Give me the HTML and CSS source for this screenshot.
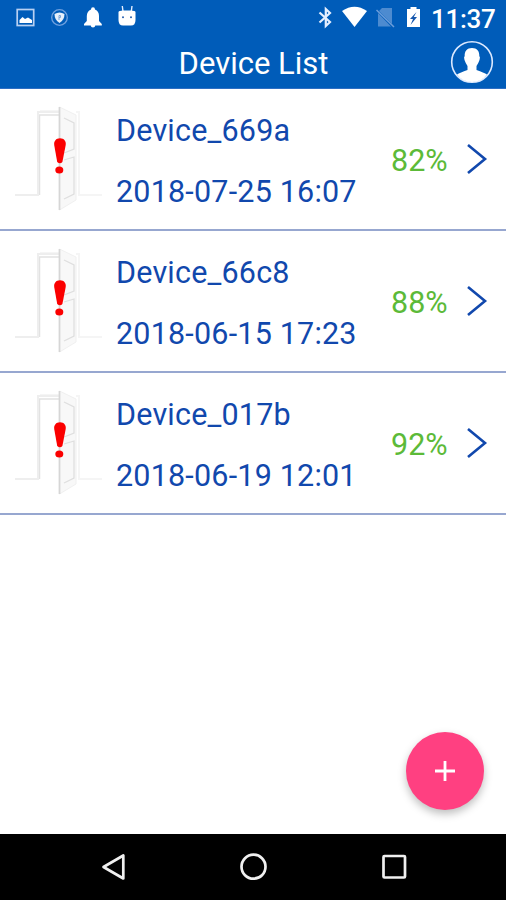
FILE: index.html
```html
<!DOCTYPE html>
<html lang="en">
<head>
<meta charset="utf-8">
<title>Device List</title>
<link rel="stylesheet" href="styles.css">
</head>
<body>
<svg class="defs" aria-hidden="true">
  <symbol id="door" viewBox="0 0 116 140">
    <path d="M40 22H59M76 23H79V106H102" fill="none" stroke="#f5f5f5" stroke-width="2"/>
    <path d="M39.500 106V26H59" fill="none" stroke="#e2e2e2" stroke-width="1.500"/>
    <path d="M15 106H38V23H59" fill="none" stroke="#eeeeee" stroke-width="2"/>
    <path d="M59.500 18L76 26V111L59.500 121Z" fill="#f8f8f8" stroke="#f0f0f0"/>
    <path d="M64 29L74 34V60L64 64M64 71L74 68V105L64 110" fill="none" stroke="#dfdfdf" stroke-width="1.300"/>
    <path d="M59.500 18V121" stroke="#d6d6d6" stroke-width="1.800"/>
    <path d="M60 49.200C64 49.200 66.300 52 65.700 56L62.400 73Q60 75.500 57.200 73L54.200 56C53.700 52 56 49.200 60 49.200Z" fill="#fb0000"/>
    <ellipse cx="59.300" cy="81" rx="4" ry="3.500" fill="#fb0000"/>
  </symbol>
  <symbol id="chevron" viewBox="0 0 22 32"><path d="M2 2L19 16L2 30" fill="none" stroke="#1148ad" stroke-width="2.600"/></symbol>
</svg>
<header class="header">
  <div class="status">
    <svg class="status-left" viewBox="0 0 140 36">
      <rect x="17.200" y="9.500" width="16.500" height="16" fill="none" stroke="#b8d0f2" stroke-width="1.700"/>
      <path d="M19.500 23V20L22.500 17L25 19L28 17.500L32 20V23Z" fill="#fff"/>
      <circle cx="59.500" cy="17.500" r="7.800" fill="none" stroke="#6fa0de" stroke-width="1.300"/>
      <path d="M54.500 14Q59.500 11 64.500 14Q64.500 20 59.500 23Q54.500 20 54.500 14Z" fill="#e5effb"/>
      <path d="M59 20V15.500H60.500V17.500H59" fill="none" stroke="#7ba4d8" stroke-width="1"/>
      <path d="M93 7.200Q95 7.200 95 9.500Q99 11 99 16V21L101.800 24V25.500H84V24L86.800 21V16Q87 11 91 9.500Q91 7.200 93 7.200ZM90.500 25H95.500Q95 27.500 93 27.500Q91 27.500 90.500 25Z" fill="#fff"/>
      <path d="M122.300 6L123 11.500M132 6L131.300 11.500" stroke="#e4eeff" stroke-width="1.400"/>
      <path d="M118.500 12Q119 10.500 123 10.500H131Q135 10.500 135.500 12V20Q135.500 25.500 131 25.500H123Q118.500 25.500 118.500 20Z" fill="#fff"/>
      <circle cx="123" cy="17.200" r="1" fill="#245fb0"/><circle cx="131" cy="17.200" r="1" fill="#245fb0"/>
    </svg>
    <svg class="status-right" viewBox="313 0 110 36">
      <path d="M319.500 12.500L330 22L325.800 26V9L330 13L319.500 22.500" fill="none" stroke="#e5efff" stroke-width="2.200"/>
      <path d="M342 11Q354.500 2.500 367 11L354.500 27Z" fill="#fff"/>
      <path d="M382 8H392V24L379 11ZM378 13L391 26.500H378Z" fill="#4d8bd0"/>
      <path d="M376.500 10L394 27" stroke="#6b9dda" stroke-width="1.500"/>
      <path d="M410.500 7H416.500V9H420V27H407V9H410.500Z" fill="#fff"/>
      <path d="M416.500 12L410 19H413L410.500 25L417 17H413.800Z" fill="#1557ad"/>
    </svg>
    <span class="clock">11:37</span>
  </div>
  <div class="titlebar">
    <h1>Device List</h1>
    <svg class="profile" viewBox="0 0 44 44">
      <circle cx="22" cy="22" r="20.300" fill="none" stroke="#dce9ff" stroke-width="1.600"/>
      <path d="M22 8C27 8 29.500 11 29.300 16Q30.500 17 29.500 20Q28.500 23 26.500 26V30Q34 32.500 37 34.500Q31.500 42 22 42Q12.500 42 7 34.500Q10 32.500 17.500 30V26Q15.500 23 14.500 20Q13.500 17 14.700 16C14.500 11 17 8 22 8Z" fill="#fff"/>
    </svg>
  </div>
</header>
<main class="content">
  <ul class="devices">
    <li class="device"><svg class="door"><use href="#door"/></svg><div class="info"><span class="name">Device_669a</span><span class="date">2018-07-25 16:07</span></div><span class="level">82%</span><svg class="chevron"><use href="#chevron"/></svg></li>
    <li class="device"><svg class="door"><use href="#door"/></svg><div class="info"><span class="name">Device_66c8</span><span class="date">2018-06-15 17:23</span></div><span class="level">88%</span><svg class="chevron"><use href="#chevron"/></svg></li>
    <li class="device"><svg class="door"><use href="#door"/></svg><div class="info"><span class="name">Device_017b</span><span class="date">2018-06-19 12:01</span></div><span class="level">92%</span><svg class="chevron"><use href="#chevron"/></svg></li>
  </ul>
  <button class="fab" aria-label="Add device"><svg viewBox="0 0 20 20"><path d="M10 0V20M0 10H20" stroke="#fff" stroke-width="2.800"/></svg></button>
</main>
<nav class="navbar">
  <svg viewBox="0 0 506 66">
    <g fill="none" stroke="#f0f0f0" stroke-width="2.700">
      <path d="M103.500 33L123.300 21.500V44.500Z" stroke-linejoin="round"/>
      <circle cx="253.500" cy="32.700" r="12"/>
      <rect x="383.500" y="22" width="21.500" height="21.500" rx="1"/>
    </g>
  </svg>
</nav>
</body>
</html>
```
FILE: styles.css
```css
* { box-sizing: border-box; }
body {
  margin: 0;
  height: 900px;
  display: flex;
  flex-direction: column;
  background: #fff;
  font-family: Roboto, "Liberation Sans", sans-serif;
  overflow: hidden;
}
.defs { position: absolute; width: 0; height: 0; }
svg { display: block; flex: none; }
.header { height: 89px; background: #005cb9; border-bottom: 1px solid #2e6fc4; color: #fff; flex: none; }
.status { height: 36px; display: flex; }
.status-left { width: 140px; height: 36px; margin-right: auto; }
.status-right { width: 110px; height: 36px; }
.clock { width: 83px; padding-left: 8px; font-size: 26px; line-height: 39px; font-weight: 500; letter-spacing: -0.3px; white-space: nowrap; }
.titlebar { height: 52px; display: grid; grid-template-columns: 1fr auto 1fr; align-items: center; }
h1 { grid-column: 2; margin: 4px 0 0 1px; font-size: 31px; line-height: 36px; font-weight: 400; white-space: nowrap; }
.profile { width: 44px; height: 44px; justify-self: end; margin: 0 12px 0 0; }
.content { flex: 1; position: relative; }
.devices { margin: 0; padding: 0; list-style: none; }
.device { height: 142px; display: flex; align-items: center; border-bottom: 2px solid #97a7d0; color: #1148ad; }
.door { width: 116px; height: 140px; }
.info { display: flex; flex-direction: column; gap: 25px; flex: 1; padding-top: 5px; }
.name, .date { font-size: 30.5px; font-weight: 400; line-height: 36px; letter-spacing: 0.2px; white-space: nowrap; }
.level { width: 75px; font-size: 30.5px; font-weight: 400; line-height: 36px; color: #5cba38; padding-top: 4px; }
.chevron { width: 22px; height: 32px; margin-right: 18px; }
.fab {
  position: absolute;
  right: 22px;
  bottom: 24px;
  width: 78px;
  height: 78px;
  padding: 0;
  border: 0;
  border-radius: 50%;
  background: #ff4081;
  box-shadow: 0 4px 9px rgba(0, 0, 0, 0.26);
  display: grid;
  place-items: center;
}
.fab svg { width: 20px; height: 20px; }
.navbar { height: 66px; flex: none; background: #000; }
.navbar svg { width: 506px; height: 66px; }
```
